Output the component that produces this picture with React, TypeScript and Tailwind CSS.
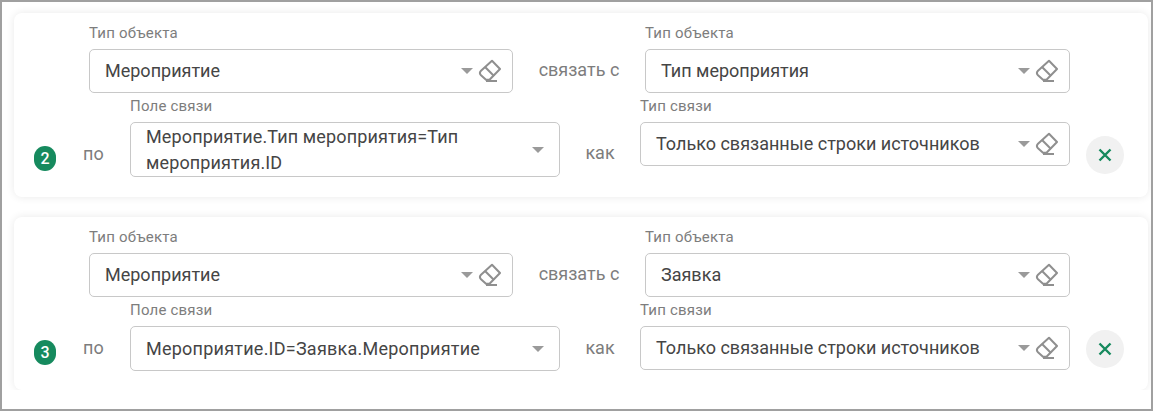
const font = { fontFamily: "Roboto, sans-serif" };

function Eraser() {
  return (
    <svg width="24" height="24" viewBox="0 0 24 24" fill="none" stroke="#8f8f8f" strokeWidth="2" className="shrink-0">
      <path d="M14 1.8 L22 10 L11.5 20.8 L8 20.8 L3 16.2 C1.6 14.8 1.6 13.2 3 11.8 Z" strokeLinejoin="round" />
      <path d="M6.8 7.8 L16 17" />
      <path d="M8 22 L19 22" />
    </svg>
  );
}

function Caret() {
  return <span className="w-0 h-0 shrink-0 border-x-[6px] border-x-transparent border-t-[6px] border-t-[#9a9a9a]" />;
}

function Field({
  label,
  value,
  width,
  tall = false,
  clear = true,
  height = "h-[44px]",
  spacing = "",
}: {
  label: string;
  value: string;
  width: string;
  tall?: boolean;
  clear?: boolean;
  height?: string;
  spacing?: string;
}) {
  return (
    <div className={`shrink-0 ${width}`}>
      <div className="h-[16px] mb-2 text-[15px] leading-[16px] tracking-[0.2px] text-[#7d7d7d] whitespace-nowrap">{label}</div>
      <div className={`${height} flex items-center border border-[#c8c8c8] rounded-[5px] bg-white pl-[15px] ${clear ? "pr-[10px]" : "pr-[15px]"}`}>
        <div className={`flex-1 min-w-0 text-[18px] text-[#454545] ${spacing} ${tall ? "leading-[26px] pr-[40px]" : "leading-[24px]"}`}>{value}</div>
        <Caret />
        {clear && <div className="ml-[5px]"><Eraser /></div>}
      </div>
    </div>
  );
}

function Badge({ n }: { n: number }) {
  return (
    <div className="w-[22px] h-[25px] rounded-full bg-[#168a5e] text-white text-[16px] font-medium flex items-center justify-center shrink-0">
      {n}
    </div>
  );
}

function RemoveButton() {
  return (
    <div className="w-[38px] h-[38px] rounded-full bg-[#f1f1f1] flex items-center justify-center shrink-0">
      <svg width="14" height="14" viewBox="0 0 14 14" stroke="#168a5e" strokeWidth="2.4" fill="none">
        <path d="M1.5 1.5 L12.5 12.5 M12.5 1.5 L1.5 12.5" />
      </svg>
    </div>
  );
}

function LinkCard({
  n,
  second,
  linkField,
  tall,
  bottom,
  spacing,
}: {
  n: number;
  second: string;
  linkField: string;
  tall?: boolean;
  bottom: string;
  spacing: string;
}) {
  return (
    <div className={`rounded-[8px] bg-white shadow-[0_0_8px_rgba(0,0,0,0.09)] pt-3 ${bottom}`}>
      <div className="flex items-start pl-[75px]">
        <Field label="Тип объекта" value="Мероприятие" width="w-[424px]" />
        <div className="w-[132px] pt-[33px] text-center text-[18px] leading-[24px] text-[#7d7d7d]">связать с</div>
        <Field label="Тип объекта" value={second} width="w-[425px]" />
      </div>
      <div className="flex items-start mt-[5px] pl-[20px]">
        <div className={`w-[22px] ${tall ? "pt-[48px]" : "pt-[38px]"}`}><Badge n={n} /></div>
        <div className={`w-[74px] pl-[27px] text-[18px] leading-[24px] text-[#7d7d7d] ${tall ? "pt-[44px]" : "pt-[34px]"}`}>по</div>
        <Field
          label="Поле связи"
          value={linkField}
          width="w-[430px]"
          tall={tall}
          clear={false}
          height={tall ? "h-[55px]" : "h-[45px]"}
          spacing={spacing}
        />
        <div className={`w-[80px] text-center text-[18px] leading-[24px] text-[#7d7d7d] ${tall ? "pt-[43px]" : "pt-[34px]"}`}>как</div>
        <Field label="Тип связи" value="Только связанные строки источников" width="w-[430px]" />
        <div className={`ml-[16px] ${tall ? "pt-[38px]" : "pt-[28px]"}`}><RemoveButton /></div>
      </div>
    </div>
  );
}

export default function App() {
  return (
    <div className="w-[1153px] h-[411px] border-2 border-[#a0a0a0] bg-white overflow-hidden" style={font}>
      <div className="h-[388px] overflow-hidden pl-3 pr-[3px] pt-[11px] flex flex-col gap-5">
        <LinkCard
          n={2}
          second="Тип мероприятия"
          linkField="Мероприятие.Тип мероприятия=Тип мероприятия.ID"
          tall
          bottom="pb-5"
          spacing="tracking-[0.13px]"
        />
        <LinkCard
          n={3}
          second="Заявка"
          linkField="Мероприятие.ID=Заявка.Мероприятие"
          bottom="pb-[19px]"
          spacing="tracking-[0.24px]"
        />
      </div>
    </div>
  );
}
